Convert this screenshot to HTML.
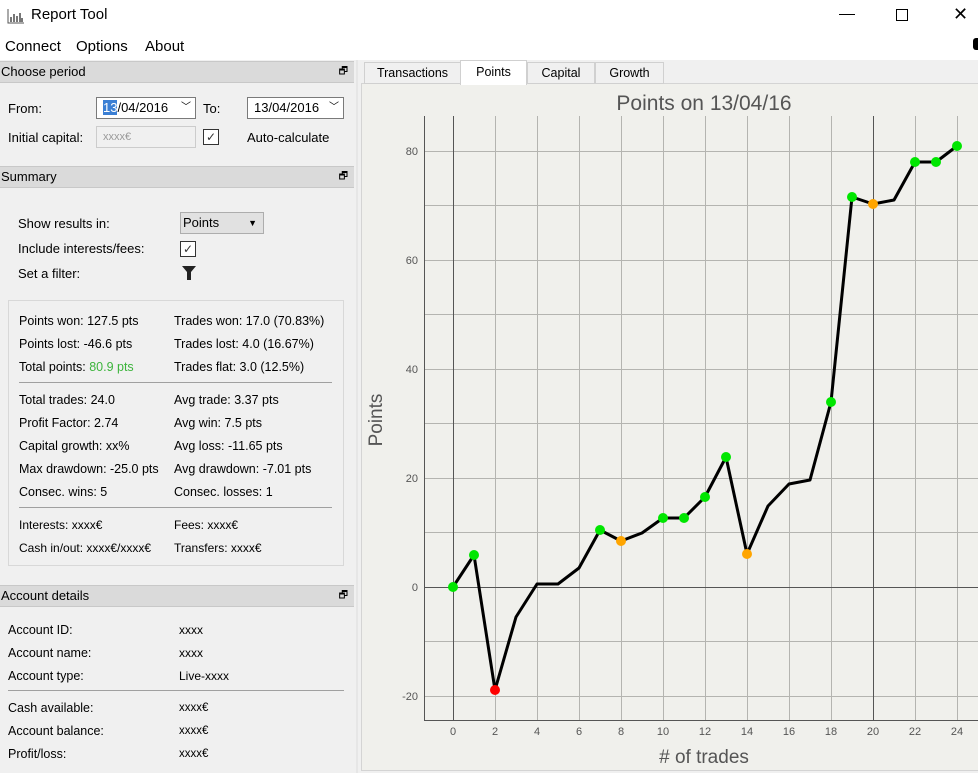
<!DOCTYPE html>
<html><head><meta charset="utf-8"><style>
*{margin:0;padding:0;box-sizing:border-box}
body{width:978px;height:773px;background:#f0f0f0;font-family:"Liberation Sans","DejaVu Sans",sans-serif;font-size:12.5px;color:#000;position:relative;overflow:hidden}
.a{position:absolute;white-space:nowrap}
.hdr{position:absolute;left:0;width:354px;height:22px;background:#dadada;border-top:1px solid #c8c8c8;border-bottom:1px solid #c8c8c8;font-size:13px;line-height:20px;padding-left:1px}
.hdr b{position:absolute;right:6px;top:0;font-weight:normal;font-size:10px}
.box{position:absolute;background:#fff;border:1px solid #7a7a7a;height:22px;line-height:20px;padding-left:6px;font-size:13px}
.chk{position:absolute;width:16px;height:16px;border:1px solid #333;background:#fff;font-size:12px;line-height:14px;text-align:center;color:#333}
.sep{position:absolute;height:1px;background:#a0a0a0}
</style></head><body>
<div class="a" style="left:0;top:0;width:978px;height:60px;background:#fff"></div>
<svg class="a" style="left:7px;top:8px" width="18" height="16"><path d="M1 1v14h16" stroke="#555" fill="none"/><path d="M4 14V9M7 14V6M10 14V8M13 14V5M15 14V10" stroke="#777" stroke-width="2"/></svg>
<div class="a" style="left:31px;top:6px;font-size:15px">Report Tool</div>
<div class="a" style="left:839px;top:14px;width:16px;height:1px;background:#000"></div>
<div class="a" style="left:896px;top:9px;width:12px;height:12px;border:1px solid #000"></div>
<div class="a" style="left:953px;top:4px;font-size:18px;font-weight:100">✕</div>
<div class="a" style="left:973px;top:38px;width:6px;height:12px;background:#000;border-radius:3px 0 0 3px"></div>
<div class="a" style="left:5px;top:38px;font-size:15px">Connect</div>
<div class="a" style="left:76px;top:38px;font-size:15px">Options</div>
<div class="a" style="left:145px;top:38px;font-size:15px">About</div>

<div class="hdr" style="top:61px">Choose period<b>🗗</b></div>
<div class="a" style="left:8px;top:101px;font-size:13px">From:</div>
<div class="box" style="left:96px;top:97px;width:100px"><span style="background:#3b7fd4;color:#fff">13</span>/04/2016 <span style="position:absolute;right:4px;font-size:10px">﹀</span></div>
<div class="a" style="left:203px;top:101px;font-size:13px">To:</div>
<div class="box" style="left:247px;top:97px;width:97px">13/04/2016 <span style="position:absolute;right:4px;font-size:10px">﹀</span></div>
<div class="a" style="left:8px;top:130px;font-size:13px">Initial capital:</div>
<div class="box" style="left:96px;top:126px;width:100px;background:#f0f0f0;border-color:#ccc;color:#999;font-size:11px">xxxx€</div>
<div class="chk" style="left:203px;top:129px">✓</div>
<div class="a" style="left:247px;top:130px;font-size:13px">Auto-calculate</div>

<div class="hdr" style="top:166px">Summary<b>🗗</b></div>
<div class="a" style="left:18px;top:216px;font-size:13px">Show results in:</div>
<div class="a" style="left:180px;top:212px;width:84px;height:22px;background:#e1e1e1;border:1px solid #adadad;font-size:13px;line-height:20px;padding-left:2px">Points<span style="position:absolute;right:6px;font-size:9px">▼</span></div>
<div class="a" style="left:18px;top:241px;font-size:13px">Include interests/fees:</div>
<div class="chk" style="left:180px;top:241px">✓</div>
<div class="a" style="left:18px;top:266px;font-size:13px">Set a filter:</div>
<svg class="a" style="left:181px;top:265px" width="16" height="16"><path d="M1 1h14l-5 6v8h-4v-8z" fill="#222"/></svg>

<div class="a" style="left:8px;top:300px;width:336px;height:266px;border:1px solid #d8d8d8"></div>
<div class="a" style="left:19px;top:310px;line-height:23px;font-size:12.5px">Points won: 127.5 pts<br>Points lost: -46.6 pts<br>Total points: <span style="color:#3cb43c">80.9 pts</span></div>
<div class="a" style="left:174px;top:310px;line-height:23px;font-size:12.5px">Trades won: 17.0 (70.83%)<br>Trades lost: 4.0 (16.67%)<br>Trades flat: 3.0 (12.5%)</div>
<div class="sep" style="left:19px;top:382px;width:313px"></div>
<div class="a" style="left:19px;top:389px;line-height:23px;font-size:12.5px">Total trades: 24.0<br>Profit Factor: 2.74<br>Capital growth: xx%<br>Max drawdown: -25.0 pts<br>Consec. wins: 5</div>
<div class="a" style="left:174px;top:389px;line-height:23px;font-size:12.5px">Avg trade: 3.37 pts<br>Avg win: 7.5 pts<br>Avg loss: -11.65 pts<br>Avg drawdown: -7.01 pts<br>Consec. losses: 1</div>
<div class="sep" style="left:19px;top:507px;width:313px"></div>
<div class="a" style="left:19px;top:514px;line-height:23px;font-size:12px">Interests: xxxx€<br>Cash in/out: xxxx€/xxxx€</div>
<div class="a" style="left:174px;top:514px;line-height:23px;font-size:12px">Fees: xxxx€<br>Transfers: xxxx€</div>

<div class="hdr" style="top:585px">Account details<b>🗗</b></div>
<div class="a" style="left:8px;top:619px;line-height:23px;font-size:12.5px">Account ID:<br>Account name:<br>Account type:</div>
<div class="a" style="left:179px;top:619px;line-height:23px;font-size:12px">xxxx<br>xxxx<br>Live-xxxx</div>
<div class="sep" style="left:8px;top:690px;width:336px"></div>
<div class="a" style="left:8px;top:697px;line-height:23px;font-size:12.5px">Cash available:<br>Account balance:<br>Profit/loss:</div>
<div class="a" style="left:179px;top:697px;line-height:23px;font-size:11.5px">xxxx€<br>xxxx€<br>xxxx€</div>

<div class="a" style="left:356px;top:60px;width:2px;height:713px;background:#e6e6e6"></div>
<div class="a" style="left:361px;top:83px;width:620px;height:688px;background:#f0f0ec;border:1px solid #d4d4d4"></div>
<div class="a" style="left:364px;top:62px;width:97px;height:22px;border:1px solid #d0d0d0;background:#f0f0f0;text-align:center;line-height:20px;font-size:12.5px">Transactions</div>
<div class="a" style="left:460px;top:60px;width:67px;height:25px;border:1px solid #d0d0d0;border-bottom:none;background:#fff;text-align:center;line-height:22px;font-size:12.5px">Points</div>
<div class="a" style="left:527px;top:62px;width:68px;height:22px;border:1px solid #d0d0d0;background:#f0f0f0;text-align:center;line-height:20px;font-size:12.5px">Capital</div>
<div class="a" style="left:595px;top:62px;width:69px;height:22px;border:1px solid #d0d0d0;background:#f0f0f0;text-align:center;line-height:20px;font-size:12.5px">Growth</div>

<svg class="a" style="left:0;top:0" width="978" height="773" font-family="Liberation Sans, sans-serif">
<text x="704" y="110" font-size="21" fill="#555" text-anchor="middle">Points on 13/04/16</text>
<g stroke="#b4b4b0" stroke-width="1" fill="none">
<path d="M495.5 116V720M537.5 116V720M579.5 116V720M621.5 116V720M663.5 116V720M705.5 116V720M747.5 116V720M789.5 116V720M831.5 116V720M915.5 116V720M957.5 116V720"/>
<path d="M424 205.5H978M424 260.5H978M424 314.5H978M424 369.5H978M424 423.5H978M424 478.5H978M424 532.5H978M424 641.5H978M424 696.5H978M424 151.5H978"/>
</g>
<g stroke="#555" stroke-width="1" fill="none"><path d="M453.5 116V720M873.5 116V720M424 587.5H978M424.5 116V720.5H978"/></g>
<g font-size="11" fill="#555" text-anchor="end">
<text x="418" y="155">80</text><text x="418" y="264">60</text><text x="418" y="373">40</text><text x="418" y="482">20</text><text x="418" y="591">0</text><text x="418" y="700">-20</text></g>
<g font-size="11" fill="#555" text-anchor="middle">
<text x="453" y="735">0</text><text x="495" y="735">2</text><text x="537" y="735">4</text><text x="579" y="735">6</text><text x="621" y="735">8</text><text x="663" y="735">10</text><text x="705" y="735">12</text><text x="747" y="735">14</text><text x="789" y="735">16</text><text x="831" y="735">18</text><text x="873" y="735">20</text><text x="915" y="735">22</text><text x="957" y="735">24</text></g>
<text x="704" y="763" font-size="19" fill="#555" text-anchor="middle"># of trades</text>
<text transform="translate(382 420) rotate(-90)" font-size="19" fill="#555" text-anchor="middle">Points</text>
<polyline fill="none" stroke="#000" stroke-width="3" stroke-linejoin="round" points="453,587 474,555 495,690 516,617 537,584 558,584 579,568 600,530 621,541 642,533 663,518 684,518 705,497 726,457 747,554 768,506 789,484 810,480 831,402 852,197 873,204 894,200 915,162 936,162 957,146"/>
<g fill="#00e600"><circle cx="453" cy="587" r="5"/><circle cx="474" cy="555" r="5"/><circle cx="600" cy="530" r="5"/><circle cx="663" cy="518" r="5"/><circle cx="684" cy="518" r="5"/><circle cx="705" cy="497" r="5"/><circle cx="726" cy="457" r="5"/><circle cx="831" cy="402" r="5"/><circle cx="852" cy="197" r="5"/><circle cx="915" cy="162" r="5"/><circle cx="936" cy="162" r="5"/><circle cx="957" cy="146" r="5"/></g>
<g fill="#ffa500"><circle cx="621" cy="541" r="5"/><circle cx="747" cy="554" r="5"/><circle cx="873" cy="204" r="5"/></g>
<circle cx="495" cy="690" r="5" fill="#f00"/>
</svg>
</body></html>
